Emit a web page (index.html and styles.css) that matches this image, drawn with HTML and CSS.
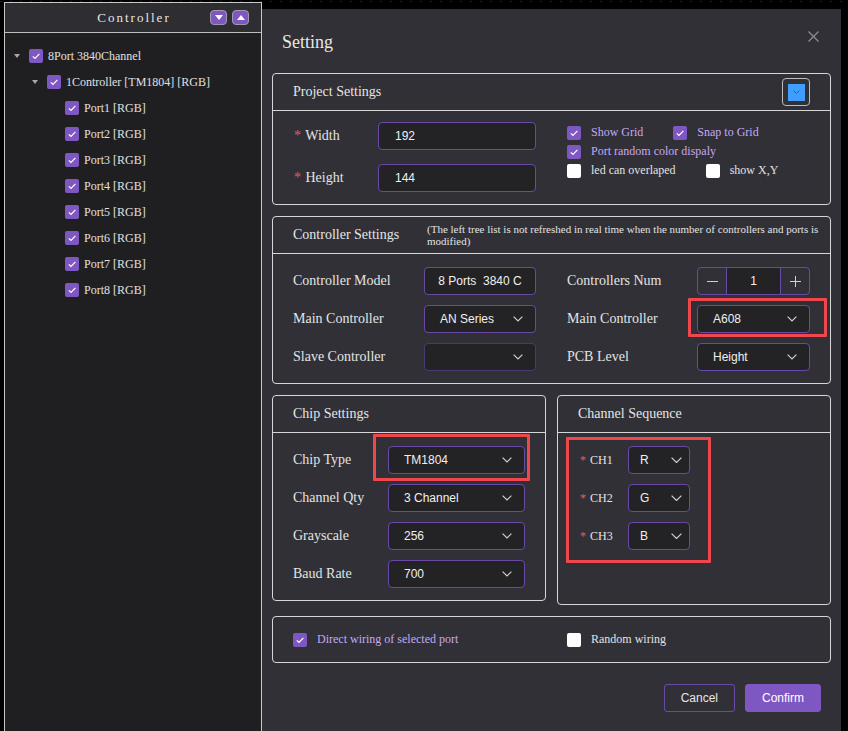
FILE: index.html
```html
<!DOCTYPE html>
<html lang="en">
<head>
    <meta charset="UTF-8">
    <meta name="viewport" content="width=device-width, initial-scale=1.0">
    <title>Setting</title>
    <link rel="stylesheet" href="styles.css">
</head>
<body>
<div class="app">
    <aside class="tree-panel">
        <div class="tree-head">
            <span class="tree-title">Controller</span>
            <div class="tree-tools">
                <button class="tool-btn"><svg width="8" height="5" viewBox="0 0 8 5"><path d="M0 0h8L4 5z" fill="#fff"/></svg></button>
                <button class="tool-btn"><svg width="8" height="5" viewBox="0 0 8 5"><path d="M0 5h8L4 0z" fill="#fff"/></svg></button>
            </div>
        </div>
        <ul class="tree">
            <li class="node lvl0"><span class="caret"></span><span class="cb on"></span>8Port 3840Channel</li>
            <li class="node lvl1"><span class="caret"></span><span class="cb on"></span>1Controller [TM1804] [RGB]</li>
            <li class="node lvl2"><span class="cb on"></span>Port1 [RGB]</li>
            <li class="node lvl2"><span class="cb on"></span>Port2 [RGB]</li>
            <li class="node lvl2"><span class="cb on"></span>Port3 [RGB]</li>
            <li class="node lvl2"><span class="cb on"></span>Port4 [RGB]</li>
            <li class="node lvl2"><span class="cb on"></span>Port5 [RGB]</li>
            <li class="node lvl2"><span class="cb on"></span>Port6 [RGB]</li>
            <li class="node lvl2"><span class="cb on"></span>Port7 [RGB]</li>
            <li class="node lvl2"><span class="cb on"></span>Port8 [RGB]</li>
        </ul>
    </aside>

    <section class="dialog">
        <header class="dialog-head">
            <h1>Setting</h1>
            <svg class="close" width="11" height="11" viewBox="0 0 11 11"><path d="M0.5 0.5l10 10M10.5 0.5l-10 10" stroke="#8c8c92" stroke-width="1.3"/></svg>
        </header>

        <!-- project -->
        <div class="box">
            <div class="box-head">
                <span>Project Settings</span>
                <button class="color-btn"><span class="swatch"><svg width="7" height="4" viewBox="0 0 7 4"><path d="M0.5 0.5l3 3 3-3" stroke="#4a5a70" fill="none"/></svg></span></button>
            </div>
            <div class="project-body">
                <div class="fields">
                    <div class="field">
                        <label class="lbl-project"><i class="req">*</i> Width</label>
                        <div class="input wide">192</div>
                    </div>
                    <div class="field">
                        <label class="lbl-project"><i class="req">*</i> Height</label>
                        <div class="input wide">144</div>
                    </div>
                </div>
                <div class="opts">
                    <div class="opt-row">
                        <span class="check on"><span class="cb on"></span>Show Grid</span>
                        <span class="check on"><span class="cb on"></span>Snap to Grid</span>
                    </div>
                    <div class="opt-row">
                        <span class="check on"><span class="cb on"></span>Port random color dispaly</span>
                    </div>
                    <div class="opt-row">
                        <span class="check"><span class="cb"></span>led can overlaped</span>
                        <span class="check"><span class="cb"></span>show X,Y</span>
                    </div>
                </div>
            </div>
        </div>

        <!-- controller -->
        <div class="box">
            <div class="box-head start">
                <span class="ctrl-title">Controller Settings</span>
                <span class="note">(The left tree list is not refreshed in real time when the number of controllers and ports is<br>modified)</span>
            </div>
            <div class="ctrl-body">
                <div class="field">
                    <label class="lbl-ctrl">Controller Model</label>
                    <div class="input center ctrl-input">8 Ports&nbsp; 3840 C</div>
                </div>
                <div class="field">
                    <label class="lbl-ctrl-r">Controllers Num</label>
                    <div class="stepper">
                        <span class="step"><svg width="11" height="1" viewBox="0 0 11 1"><path d="M0 0.5h11" stroke="#cfcfcf"/></svg></span>
                        <span class="step-val">1</span>
                        <span class="step"><svg width="11" height="11" viewBox="0 0 11 11"><path d="M0 5.5h11M5.5 0v11" stroke="#cfcfcf"/></svg></span>
                    </div>
                </div>
                <div class="field">
                    <label class="lbl-ctrl">Main Controller</label>
                    <div class="select ctrl-input"><span>AN Series</span><svg class="chev" width="10" height="6" viewBox="0 0 10 6"><path d="M0.6 0.6l4.4 4.4 4.4-4.4" stroke="#d0d0d0" stroke-width="1.2" fill="none"/></svg></div>
                </div>
                <div class="field hl-host">
                    <label class="lbl-ctrl-r">Main Controller</label>
                    <div class="select ctrl-input-r"><span>A608</span><svg class="chev" width="10" height="6" viewBox="0 0 10 6"><path d="M0.6 0.6l4.4 4.4 4.4-4.4" stroke="#d0d0d0" stroke-width="1.2" fill="none"/></svg></div>
                    <span class="hl hl-main"></span>
                </div>
                <div class="field">
                    <label class="lbl-ctrl">Slave Controller</label>
                    <div class="select ctrl-input dim"><span></span><svg class="chev" width="10" height="6" viewBox="0 0 10 6"><path d="M0.6 0.6l4.4 4.4 4.4-4.4" stroke="#d0d0d0" stroke-width="1.2" fill="none"/></svg></div>
                </div>
                <div class="field">
                    <label class="lbl-ctrl-r">PCB Level</label>
                    <div class="select ctrl-input-r"><span>Height</span><svg class="chev" width="10" height="6" viewBox="0 0 10 6"><path d="M0.6 0.6l4.4 4.4 4.4-4.4" stroke="#d0d0d0" stroke-width="1.2" fill="none"/></svg></div>
                </div>
            </div>
        </div>

        <div class="split">
            <!-- chip -->
            <div class="box half">
                <div class="box-head"><span>Chip Settings</span></div>
                <div class="chip-body">
                    <div class="field hl-host">
                        <label class="lbl-chip">Chip Type</label>
                        <div class="select chip-input"><span>TM1804</span><svg class="chev" width="10" height="6" viewBox="0 0 10 6"><path d="M0.6 0.6l4.4 4.4 4.4-4.4" stroke="#d0d0d0" stroke-width="1.2" fill="none"/></svg></div>
                        <span class="hl hl-chip"></span>
                    </div>
                    <div class="field">
                        <label class="lbl-chip">Channel Qty</label>
                        <div class="select chip-input"><span>3 Channel</span><svg class="chev" width="10" height="6" viewBox="0 0 10 6"><path d="M0.6 0.6l4.4 4.4 4.4-4.4" stroke="#d0d0d0" stroke-width="1.2" fill="none"/></svg></div>
                    </div>
                    <div class="field">
                        <label class="lbl-chip">Grayscale</label>
                        <div class="select chip-input"><span>256</span><svg class="chev" width="10" height="6" viewBox="0 0 10 6"><path d="M0.6 0.6l4.4 4.4 4.4-4.4" stroke="#d0d0d0" stroke-width="1.2" fill="none"/></svg></div>
                    </div>
                    <div class="field">
                        <label class="lbl-chip">Baud Rate</label>
                        <div class="select chip-input"><span>700</span><svg class="chev" width="10" height="6" viewBox="0 0 10 6"><path d="M0.6 0.6l4.4 4.4 4.4-4.4" stroke="#d0d0d0" stroke-width="1.2" fill="none"/></svg></div>
                    </div>
                </div>
            </div>

            <!-- channel sequence -->
            <div class="box half tall">
                <div class="box-head"><span>Channel Sequence</span></div>
                <div class="seq-body">
                    <span class="hl hl-seq"></span>
                    <div class="field">
                        <label class="lbl-ch"><i class="req">*</i> CH1</label>
                        <div class="select ch-input"><span>R</span><svg class="chev" width="11" height="6" viewBox="0 0 11 6"><path d="M0.6 0.6l4.9 4.9 4.9-4.9" stroke="#d0d0d0" stroke-width="1.2" fill="none"/></svg></div>
                    </div>
                    <div class="field">
                        <label class="lbl-ch"><i class="req">*</i> CH2</label>
                        <div class="select ch-input"><span>G</span><svg class="chev" width="11" height="6" viewBox="0 0 11 6"><path d="M0.6 0.6l4.9 4.9 4.9-4.9" stroke="#d0d0d0" stroke-width="1.2" fill="none"/></svg></div>
                    </div>
                    <div class="field">
                        <label class="lbl-ch"><i class="req">*</i> CH3</label>
                        <div class="select ch-input"><span>B</span><svg class="chev" width="11" height="6" viewBox="0 0 11 6"><path d="M0.6 0.6l4.9 4.9 4.9-4.9" stroke="#d0d0d0" stroke-width="1.2" fill="none"/></svg></div>
                    </div>
                </div>
            </div>
        </div>

        <!-- wiring -->
        <div class="box wiring">
            <span class="check on wire-first"><span class="cb on"></span>Direct wiring of selected port</span>
            <span class="check"><span class="cb"></span>Random wiring</span>
        </div>

        <footer class="dialog-foot">
            <button class="btn">Cancel</button>
            <button class="btn primary">Confirm</button>
        </footer>
    </section>
</div>
</body>
</html>
```

FILE: styles.css
```css
body {
    margin: 0;
    background: #000;
    font-family: "Liberation Serif", "Times New Roman", serif;
    color: #e4e4e4;
    height: 731px;
    overflow: hidden;
}

.app {
    display: flex;
    align-items: flex-start;
    height: 731px;
    background-image: repeating-linear-gradient(90deg, #142436 0 2px, transparent 2px 10px);
    background-size: 100% 1px;
    background-position: 0 1px;
    background-repeat: no-repeat;
}

/* left tree */
.tree-panel {
    width: 258px;
    height: 729px;
    margin: 2px 0 0 4px;
    box-sizing: border-box;
    border: 1px solid #c8c8c8;
    border-bottom: none;
    background: #1f1f22;
}

.tree-head {
    display: grid;
    grid-template-columns: 1fr auto 1fr;
    align-items: center;
    height: 29px;
    background: #2d2d32;
    border-bottom: 1px solid #bdbdbd;
}

.tree-title {
    grid-column: 2;
    font-size: 13px;
    letter-spacing: 2px;
    margin-right: -2px;
    color: #e6e6e6;
}

.tree-tools {
    grid-column: 3;
    justify-self: end;
    display: flex;
    gap: 5px;
    padding-right: 12px;
}

.tool-btn {
    width: 17px;
    height: 15px;
    padding: 0;
    border: 1px solid #a09aa8;
    border-radius: 4px;
    background: #7e57c2;
    display: flex;
    align-items: center;
    justify-content: center;
}

.tree {
    list-style: none;
    margin: 0;
    padding: 10px 0 0 0;
}

.node {
    display: flex;
    align-items: center;
    height: 26px;
    font-size: 12px;
    color: #e0e0e0;
}

.node .cb {
    margin-right: 5px;
}

.lvl1 {
    padding-left: 18px;
}

.lvl2 {
    padding-left: 60px;
}

.caret {
    width: 24px;
    height: 26px;
    display: flex;
    align-items: center;
    justify-content: center;
}

.caret::before {
    content: "";
    border-left: 3.5px solid transparent;
    border-right: 3.5px solid transparent;
    border-top: 4px solid #a8a8a8;
}

/* checkbox */
.cb {
    flex: none;
    width: 14px;
    height: 14px;
    border-radius: 2px;
    background: #fff;
    box-sizing: border-box;
}

.cb.on {
    background: #7e57c2 url("data:image/svg+xml,%3Csvg xmlns='http://www.w3.org/2000/svg' width='14' height='14' viewBox='0 0 14 14'%3E%3Cpath d='M3.8 7.3l2.2 2.2 4.4-4.6' stroke='white' stroke-width='1.2' fill='none'/%3E%3C/svg%3E") center no-repeat;
}

/* dialog */
.dialog {
    width: 579px;
    height: 722px;
    margin-top: 9px;
    padding: 0 10px;
    box-sizing: border-box;
    background: #303036;
}

.dialog-head {
    display: flex;
    align-items: center;
    justify-content: space-between;
    height: 64px;
    padding: 0 12px 0 10px;
}

.dialog-head h1 {
    margin: 0;
    font-size: 18px;
    font-weight: normal;
    color: #e8e8e8;
    padding-top: 3px;
}

.close {
    margin-top: -9px;
}

.box {
    border: 1px solid #d6d6d6;
    border-radius: 4px;
    margin-bottom: 11px;
}

.box-head {
    display: flex;
    align-items: center;
    justify-content: space-between;
    height: 36px;
    padding: 0 20px;
    border-bottom: 1px solid #d6d6d6;
    font-size: 14px;
    color: #e6e6e6;
}

.box-head.start {
    justify-content: flex-start;
}

.ctrl-title {
    width: 134px;
    flex: none;
}

.note {
    font-size: 11px;
    line-height: 12px;
    white-space: nowrap;
    color: #e2e2e2;
    margin-top: -1px;
}

.color-btn {
    width: 28px;
    height: 28px;
    padding: 0;
    border: 1px solid #bdbdbd;
    border-radius: 4px;
    background: transparent;
    display: flex;
    align-items: center;
    justify-content: center;
}

.swatch {
    width: 17px;
    height: 17px;
    background: #409eff;
    display: flex;
    align-items: center;
    justify-content: center;
}

/* fields */
.field {
    display: flex;
    align-items: center;
    height: 28px;
    font-size: 14px;
    color: #e4e4e4;
}

.req {
    font-style: normal;
    color: #e45c62;
    margin-right: 1px;
}

.input,
.select {
    height: 28px;
    box-sizing: border-box;
    border: 1px solid #6a48a8;
    border-radius: 4px;
    background: #232326;
    font-family: "Liberation Sans", Arial, sans-serif;
    font-size: 12px;
    color: #f0f0f0;
    display: flex;
    align-items: center;
}

.input {
    padding-left: 16px;
}

.input.center {
    justify-content: center;
    padding: 0;
    white-space: nowrap;
    overflow: hidden;
}

.select {
    justify-content: space-between;
    padding: 0 12px 0 15px;
}

.select.dim {
    border-color: #4b3a72;
}

/* project */
.project-body {
    display: flex;
    padding: 11px 20px 12px;
}

.fields {
    display: flex;
    flex-direction: column;
    gap: 14px;
}

.lbl-project {
    width: 85px;
    padding-left: 1px;
    box-sizing: border-box;
}

.input.wide {
    width: 158px;
}

.opts {
    margin-left: 31px;
    padding-top: 1px;
    display: flex;
    flex-direction: column;
}

.opt-row {
    display: flex;
    align-items: center;
    gap: 30px;
    height: 19px;
}

.check {
    display: flex;
    align-items: center;
    font-size: 12px;
    color: #e2e2e2;
}

.check .cb {
    margin-right: 10px;
}

.check.on {
    color: #c7a8f3;
}

/* controller */
.ctrl-body {
    display: grid;
    grid-template-columns: 243px 243px;
    column-gap: 31px;
    row-gap: 10px;
    padding: 13px 20px 12px;
}

.lbl-ctrl {
    width: 131px;
}

.lbl-ctrl-r {
    width: 130px;
}

.ctrl-input {
    width: 112px;
}

.ctrl-input-r {
    width: 113px;
}

.stepper {
    width: 113px;
    height: 28px;
    box-sizing: border-box;
    border: 1px solid #6a48a8;
    border-radius: 4px;
    display: flex;
    font-family: "Liberation Sans", Arial, sans-serif;
    font-size: 12px;
}

.step {
    width: 28px;
    display: flex;
    align-items: center;
    justify-content: center;
}

.step-val {
    flex: 1;
    display: flex;
    align-items: center;
    justify-content: center;
    background: #232326;
    border-left: 1px solid #6a48a8;
    border-right: 1px solid #6a48a8;
    color: #f0f0f0;
}

/* split boxes */
.split {
    display: flex;
    align-items: flex-start;
    gap: 11px;
}

.half {
    flex: 1;
}

.half.tall {
    height: 210px;
    box-sizing: border-box;
}

.chip-body {
    display: flex;
    flex-direction: column;
    gap: 10px;
    padding: 13px 20px 12px;
}

.lbl-chip {
    width: 95px;
}

.chip-input {
    width: 137px;
}

.seq-body {
    position: relative;
    display: flex;
    flex-direction: column;
    gap: 10px;
    padding: 13px 0 0 22px;
}

.lbl-ch {
    width: 48px;
    font-size: 12px;
}

.ch-input {
    width: 62px;
    padding: 0 7px 0 11px;
}

/* red highlight marks */
.hl-host {
    position: relative;
}

.hl {
    position: absolute;
    box-sizing: border-box;
    border: 3px solid #f0474d;
    border-radius: 1px;
}

.hl-main {
    left: 121px;
    top: -7px;
    width: 139px;
    height: 39px;
}

.hl-chip {
    left: 80px;
    top: -12px;
    width: 157px;
    height: 47px;
}

.hl-seq {
    left: 8px;
    top: 4px;
    width: 145px;
    height: 126px;
}

/* wiring */
.wiring {
    display: flex;
    align-items: center;
    height: 45px;
    padding-left: 20px;
    margin-bottom: 0;
}

.wire-first {
    width: 274px;
}

.wiring .cb {
    margin-right: 10px;
}

/* footer */
.dialog-foot {
    display: flex;
    justify-content: flex-end;
    gap: 10px;
    padding: 21px 10px 0 0;
}

.btn {
    height: 28px;
    padding: 0 16px;
    border: 1px solid #6a48a8;
    border-radius: 3px;
    background: transparent;
    font-family: "Liberation Sans", Arial, sans-serif;
    font-size: 12px;
    color: #e6e6e6;
}

.btn.primary {
    background: #7e57c2;
    border-color: #7e57c2;
    color: #fff;
}
```
